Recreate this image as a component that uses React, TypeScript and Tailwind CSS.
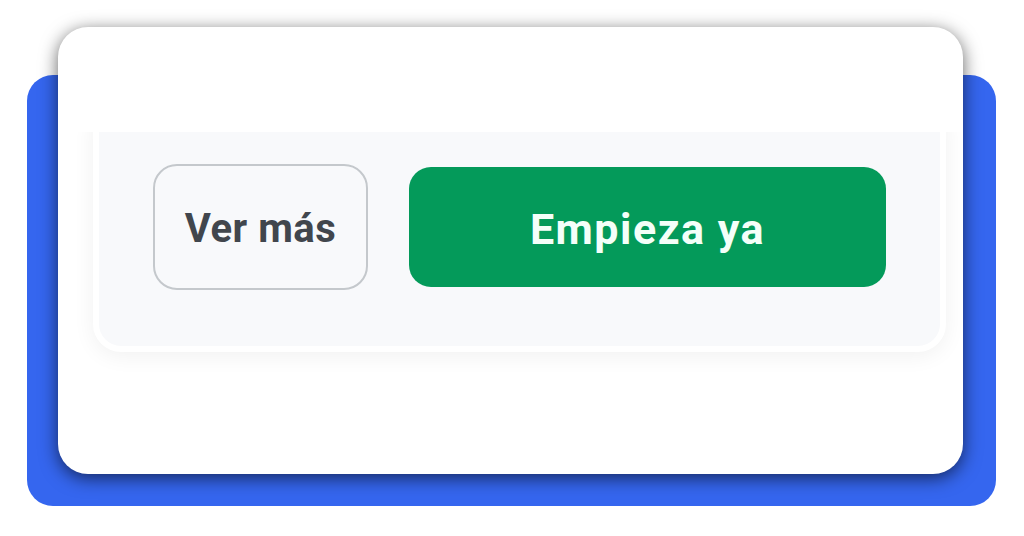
export default function App() {
    return (
        <div className="w-[1024px] h-[536px] bg-white grid overflow-hidden" style={{ fontFamily: 'Roboto, "Liberation Sans", sans-serif' }}>
            {/* blue backdrop */}
            <div className="col-start-1 row-start-1 ml-[27px] mt-[75px] w-[969px] h-[431px] rounded-[26px] bg-[#3566ef]" />

            {/* card */}
            <div className="col-start-1 row-start-1 ml-[58px] mt-[27px] w-[905px] h-[447px] rounded-[30px] bg-white shadow-[0_4px_18px_rgba(0,0,0,0.62)] overflow-hidden flex flex-col">
                <div className="mt-[105px] h-[342px] overflow-hidden">
                    <div className="-mt-[30px] ml-[35px] w-[853px] rounded-[28px] border-[6px] border-white bg-[#f8f9fb] shadow-[0_4px_22px_rgba(0,0,0,0.06)] px-[54px] py-[56px]">
                        <div className="flex items-center gap-[41px]">
                            <button className="w-[215px] h-[126px] rounded-[24px] border-2 border-[#c4c8cc] bg-[#f8f9fb] text-[40px] font-bold text-[#41464d] tracking-[0.5px] pt-[4px]">
                                Ver más
                            </button>
                            <button className="w-[477px] h-[120px] rounded-[22px] bg-[#049a5a] text-[43px] font-bold text-[#f4fff9] tracking-[1.5px] pt-[4px]">
                                Empieza ya
                            </button>
                        </div>
                    </div>
                </div>
            </div>
        </div>
    );
}
